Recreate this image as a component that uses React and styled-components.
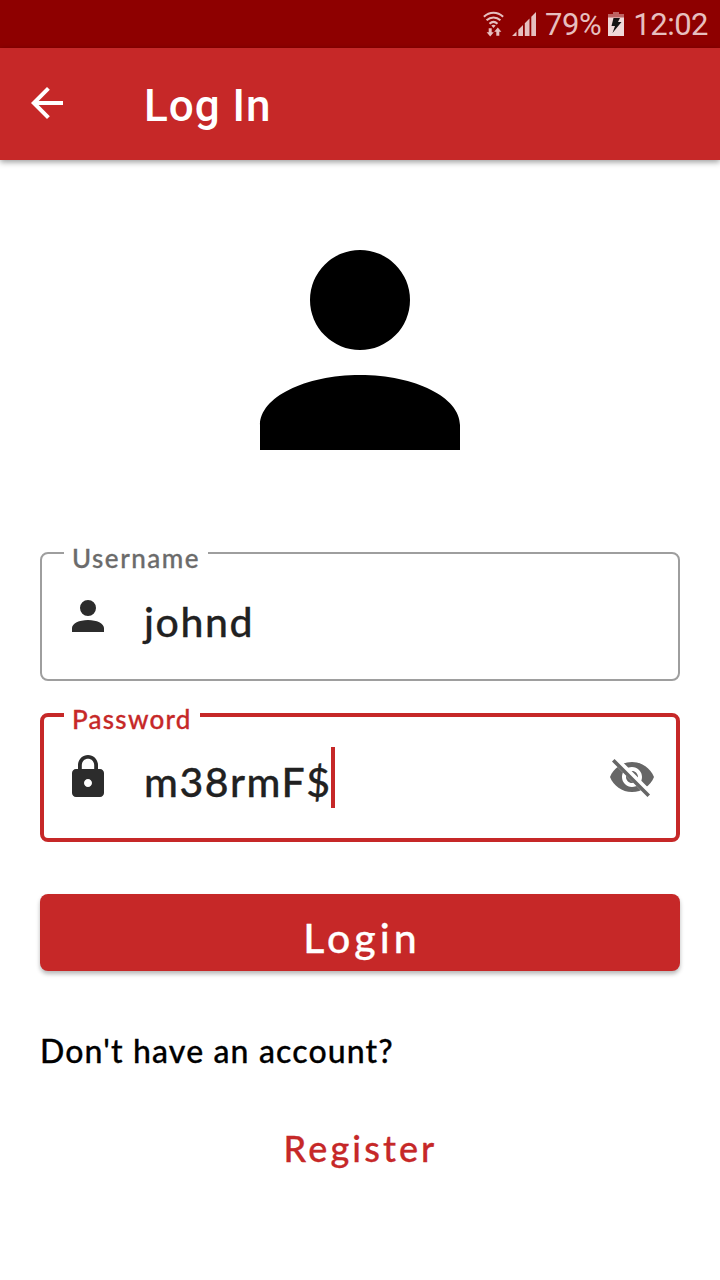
import React from "react";
import styled, { createGlobalStyle } from "styled-components";

const GlobalStyle = createGlobalStyle`
  *, *::before, *::after { box-sizing: border-box; }
  body { margin: 0; background: #fff; }
`;

const Screen = styled.div`
  display: flex;
  flex-direction: column;
  width: 720px;
  height: 1280px;
  overflow: hidden;
  background: #fff;
  font-family: Lato, "Liberation Sans", sans-serif;
  font-weight: 500;
  white-space: nowrap;
`;

const StatusBar = styled.div`
  display: flex;
  align-items: center;
  justify-content: flex-end;
  flex: none;
  height: 48px;
  padding-right: 12px;
  background: #8e0000;
  color: #e6bfbf;
  font: 400 31px/48px Roboto, sans-serif;
`;

const StatusText = styled.span`
  margin-left: ${(p) => p.$gap}px;
  letter-spacing: ${(p) => p.$spacing}px;
  padding-top: 2px;
`;

const StatusIcon = styled.svg`
  flex: none;
  margin-left: ${(p) => p.$gap || 0}px;
`;

const AppBar = styled.header`
  display: flex;
  align-items: center;
  flex: none;
  height: 112px;
  padding: 0 23px;
  background: #c62828;
  color: #fff;
  box-shadow: 0 2px 6px rgba(0, 0, 0, 0.4);
`;

const BackButton = styled.button`
  display: flex;
  margin: 0 0 2px;
  padding: 0;
  border: 0;
  background: none;
  color: inherit;
`;

const Title = styled.h1`
  margin: 4px 0 0 73px;
  font: 500 44px/56px Roboto, sans-serif;
  letter-spacing: 1px;
`;

const Content = styled.main`
  display: flex;
  flex-direction: column;
  padding: 40px 40px 0;
  -webkit-text-stroke: 0.3px currentColor;
`;

const Avatar = styled.div`
  display: flex;
  justify-content: center;
  height: 352px;
`;

const Field = styled.fieldset`
  height: 129px;
  min-width: 0;
  margin: 0 0 32px;
  padding: 0 ${(p) => 24 - p.$border}px;
  border: ${(p) => p.$border}px solid ${(p) => p.$color};
  border-radius: 8px;
`;

const Legend = styled.legend`
  width: ${(p) => p.$width}px;
  height: ${(p) => p.$border}px;
  margin: 0;
  padding: 0 8px;
  color: ${(p) => p.$color};
`;

const LegendText = styled.span`
  display: block;
  margin-top: -4px;
  font-size: 26px;
  line-height: 20px;
  letter-spacing: ${(p) => p.$spacing}px;
`;

const FieldRow = styled.div`
  display: flex;
  align-items: center;
  height: ${(p) => 127 - p.$border * 2}px;
  color: #2c2c2c;
`;

const Value = styled.span`
  margin-left: 32px;
  padding-top: ${(p) => p.$drop}px;
  color: #212121;
  font-size: 41px;
  line-height: 48px;
  letter-spacing: ${(p) => p.$spacing}px;
`;

const Caret = styled.span`
  width: 4px;
  height: 61px;
  margin-top: 1px;
  background: #c62828;
`;

const EyeButton = styled.button`
  display: flex;
  margin: 0 0 0 auto;
  padding: 0;
  border: 0;
  background: none;
  color: #666;
`;

const LoginButton = styled.button`
  height: 77px;
  margin-top: 20px;
  padding: 10px 0 0 4px;
  border: 0;
  border-radius: 8px;
  background: #c62828;
  color: #fff;
  font: inherit;
  font-size: 41px;
  letter-spacing: 4px;
  box-shadow: 0 3px 4px rgba(0, 0, 0, 0.28);
`;

const Prompt = styled.p`
  margin: 60px 0 0;
  color: #000;
  font-size: 32px;
  line-height: 40px;
  letter-spacing: 1.15px;
`;

const RegisterButton = styled.button`
  align-self: center;
  margin-top: 55px;
  padding: 0 0 0 1px;
  border: 0;
  background: none;
  color: #c62828;
  font: inherit;
  font-size: 36px;
  line-height: 44px;
  letter-spacing: 3.1px;
`;

const Icon = ({ size = 48, children }) => (
  <svg width={size} height={size} viewBox="0 0 24 24" fill="currentColor">
    {children}
  </svg>
);

const Person = ({ size }) => (
  <Icon size={size}>
    <path d="M12 4A4 4 0 0 1 16 8A4 4 0 0 1 12 12A4 4 0 0 1 8 8A4 4 0 0 1 12 4M12 14C16.42 14 20 15.79 20 18V20H4V18C4 15.79 7.58 14 12 14Z" />
  </Icon>
);

const Lock = () => (
  <Icon>
    <path d="M18 8h-1V6c0-2.76-2.24-5-5-5S7 3.24 7 6v2H6c-1.1 0-2 .9-2 2v10c0 1.1.9 2 2 2h12c1.1 0 2-.9 2-2V10c0-1.1-.9-2-2-2zm-6 9c-1.1 0-2-.9-2-2s.9-2 2-2 2 .9 2 2-.9 2-2 2zm3.1-9H8.9V6c0-1.71 1.39-3.1 3.1-3.1 1.71 0 3.1 1.39 3.1 3.1v2z" />
  </Icon>
);

const EyeOff = () => (
  <Icon>
    <clipPath id="eye-gap">
      <path d="M2 4.27L19.73 22L22.27 19.46L4.54 1.73V1H23V23H1V4.27Z" />
    </clipPath>
    <path
      clipPath="url(#eye-gap)"
      d="M12 4.5C7 4.5 2.73 7.61 1 12c1.73 4.39 6 7.5 11 7.5s9.27-3.11 11-7.5c-1.73-4.39-6-7.5-11-7.5zM12 17c-2.76 0-5-2.24-5-5s2.24-5 5-5 5 2.24 5 5-2.24 5-5 5zm0-8c-1.66 0-3 1.34-3 3s1.34 3 3 3 3-1.34 3-3-1.34-3-3-3z"
    />
    <path d="M3.27 4.27L19.74 20.74" stroke="currentColor" strokeWidth="1.8" strokeLinecap="square" />
  </Icon>
);

const Wifi = () => (
  <StatusIcon width="22" height="26" viewBox="0 0 22 26" fill="none" stroke="currentColor" strokeWidth="2.1">
    <path d="M.9 5.8C6.5.4 14.500.4 20.100 5.800M3.600 9.300c4-3.800 9.800-3.800 13.800 0M6.500 12.700c2.500-2.300 5.500-2.300 8 0" />
    <path d="M8.300 14.600c1.400-1.100 3-1.100 4.400 0l-2.200 2.300z" fill="currentColor" stroke="none" />
    <path d="M5.700 17.200h3v4h2.100l-3.600 4.300-3.600-4.300h2.100zM13.300 24.800h3v-4h2.100l-3.600-4.300-3.600 4.300h2.100z" fill="currentColor" stroke="none" />
  </StatusIcon>
);

const Signal = () => (
  <StatusIcon $gap={7} width="25" height="24" viewBox="0 0 25 24" fill="currentColor">
    <path d="M0 24l4.500-4.500V24zM6.300 17.700l4.700-4.700V24H6.300zM12.800 11.200l4.700-4.700V24h-4.700zM19.300 4.700L24 0v24h-4.700z" />
  </StatusIcon>
);

const Battery = () => (
  <StatusIcon $gap={7} width="16" height="24" viewBox="0 0 16 24">
    <path d="M5 0h6v2h5v4H0V2h5z" fill="#bd6262" />
    <path d="M0 5.500h16V24H0z" fill="#f0dada" />
    <path d="M5.500 6h6.500l-2 4h3.500L4.500 21l2.500-7H3.500z" fill="#141414" />
  </StatusIcon>
);

const OutlinedField = ({ label, labelWidth, spacing, active, children }) => {
  const border = active ? 4 : 2;
  return (
    <Field $border={border} $color={active ? "#c62828" : "#9e9e9e"}>
      <Legend $width={labelWidth} $border={border} $color={active ? "#c62828" : "#6b6b6b"}>
        <LegendText $spacing={spacing}>{label}</LegendText>
      </Legend>
      <FieldRow $border={border}>{children}</FieldRow>
    </Field>
  );
};

export default function App() {
  return (
    <Screen>
      <GlobalStyle />
      <StatusBar>
        <Wifi />
        <Signal />
        <StatusText $gap={8} $spacing={-0.4}>79%</StatusText>
        <Battery />
        <StatusText $gap={9} $spacing={-0.5}>12:02</StatusText>
      </StatusBar>
      <AppBar>
        <BackButton aria-label="Back">
          <Icon>
            <path d="M20 11H7.83l5.59-5.59L12 4l-8 8 8 8 1.410-1.410L7.830 13H20z" />
          </Icon>
        </BackButton>
        <Title>Log In</Title>
      </AppBar>
      <Content>
        <Avatar>
          <Person size={300} />
        </Avatar>
        <OutlinedField label="Username" labelWidth={144} spacing={1.5}>
          <Person size={48} />
          <Value $drop={12} $spacing={1.6}>johnd</Value>
        </OutlinedField>
        <OutlinedField label="Password" labelWidth={136} spacing={1.25} active>
          <Lock />
          <Value $drop={10} $spacing={1.5}>m38rmF$</Value>
          <Caret />
          <EyeButton aria-label="Hide password">
            <EyeOff />
          </EyeButton>
        </OutlinedField>
        <LoginButton>Login</LoginButton>
        <Prompt>Don't have an account?</Prompt>
        <RegisterButton>Register</RegisterButton>
      </Content>
    </Screen>
  );
}
